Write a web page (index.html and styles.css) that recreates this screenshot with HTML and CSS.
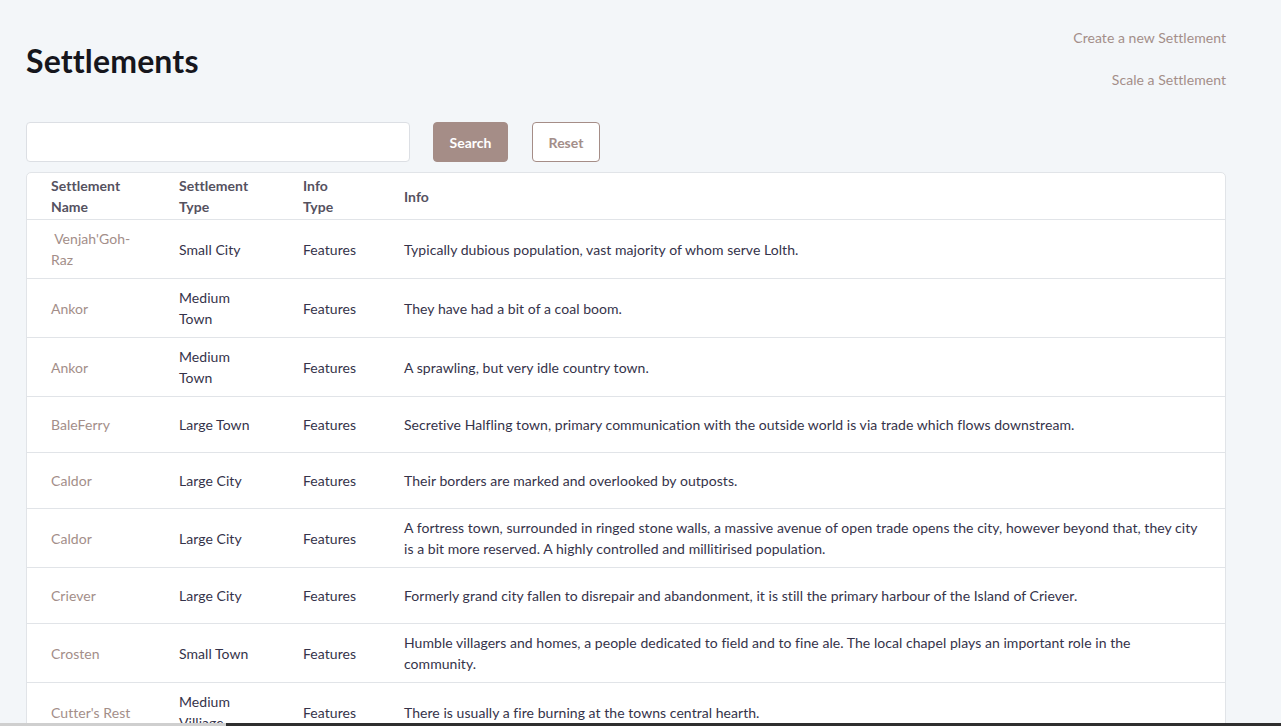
FILE: index.html
```html
<!DOCTYPE html>
<html lang="en">
<head>
<meta charset="utf-8">
<title>Settlements</title>
<link rel="stylesheet" href="styles.css">
</head>
<body>
<div class="page">
  <header class="header">
    <h1 class="title">Settlements</h1>
    <nav class="links">
      <a class="link" href="#">Create a new Settlement</a>
      <a class="link" href="#">Scale a Settlement</a>
    </nav>
  </header>
  <form class="search">
    <input class="search-input" type="text">
    <button class="btn btn-primary" type="button">Search</button>
    <button class="btn btn-outline" type="button">Reset</button>
  </form>
  <div class="card">
    <table class="table">
      <colgroup>
        <col class="c1"><col class="c2"><col class="c3"><col class="c4">
      </colgroup>
      <thead>
        <tr><th>Settlement Name</th><th>Settlement Type</th><th>Info Type</th><th>Info</th></tr>
      </thead>
      <tbody>
        <tr><td class="name">&nbsp;Venjah'Goh-Raz</td><td>Small City</td><td>Features</td><td>Typically dubious population, vast majority of whom serve Lolth.</td></tr>
        <tr><td class="name">Ankor</td><td>Medium Town</td><td>Features</td><td>They have had a bit of a coal boom.</td></tr>
        <tr><td class="name">Ankor</td><td>Medium Town</td><td>Features</td><td>A sprawling, but very idle country town.</td></tr>
        <tr><td class="name">BaleFerry</td><td>Large Town</td><td>Features</td><td>Secretive Halfling town, primary communication with the outside world is via trade which flows downstream.</td></tr>
        <tr><td class="name">Caldor</td><td>Large City</td><td>Features</td><td>Their borders are marked and overlooked by outposts.</td></tr>
        <tr><td class="name">Caldor</td><td>Large City</td><td>Features</td><td>A fortress town, surrounded in ringed stone walls, a massive avenue of open trade opens the city, however beyond that, they city is a bit more reserved. A highly controlled and millitirised population.</td></tr>
        <tr><td class="name">Criever</td><td>Large City</td><td>Features</td><td>Formerly grand city fallen to disrepair and abandonment, it is still the primary harbour of the Island of Criever.</td></tr>
        <tr><td class="name">Crosten</td><td>Small Town</td><td>Features</td><td>Humble villagers and homes, a people dedicated to field and to fine ale. The local chapel plays an important role in the community.</td></tr>
        <tr><td class="name">Cutter's Rest</td><td>Medium Villiage</td><td>Features</td><td>There is usually a fire burning at the towns central hearth.</td></tr>
        <tr><td class="name">Dunmar</td><td>Large Town</td><td>Features</td><td>A busy market town.</td></tr>
      </tbody>
    </table>
  </div>
</div>
<div class="hscroll"><div class="hscroll-thumb"></div></div>
</body>
</html>
```
FILE: styles.css
```css
* { box-sizing: border-box; }
html, body { margin: 0; padding: 0; }
body {
  background: #f3f6f9;
  font-family: "Lato", "Noto Sans", sans-serif;
  font-size: 14px;
  color: #35334a;
  overflow: hidden;
  height: 726px;
}
.page {
  width: 1200px;
  margin-left: 26px;
  padding-top: 28px;
}
.header {
  display: flex;
  justify-content: space-between;
  align-items: flex-start;
}
.title {
  margin: 14px 0 0 0;
  font-size: 32px;
  line-height: 38px;
  font-weight: 700;
  color: #16161d;
  letter-spacing: 0.15px;
}
.links {
  display: flex;
  flex-direction: column;
  align-items: flex-end;
  gap: 21px;
  margin-top: -1px;
}
.link {
  color: #a38e89;
  text-decoration: none;
  font-size: 14px;
  line-height: 21px;
  letter-spacing: 0.05px;
}
.search {
  display: flex;
  align-items: center;
  margin-top: 32px;
  margin-bottom: 10px;
}
.search-input {
  width: 384px;
  height: 40px;
  border: 1px solid #dcdfe4;
  border-radius: 4px;
  background: #fff;
  margin: 0 23px 0 0;
}
.btn {
  height: 40px;
  border-radius: 4px;
  font-family: inherit;
  font-size: 14px;
  font-weight: 700;
  padding: 0 12px;
  cursor: pointer;
}
.btn-primary {
  width: 75px;
  background: #a58d87;
  border: 1px solid #a58d87;
  color: #fff;
  margin-right: 24px;
}
.btn-outline {
  width: 68px;
  background: #fff;
  border: 1px solid #a58d87;
  color: #a38e89;
}
.card {
  background: #fff;
  border: 1px solid #e1e4e8;
  border-radius: 5px;
  overflow: hidden;
}
.table {
  width: 100%;
  border-collapse: collapse;
  table-layout: fixed;
  letter-spacing: 0.05px;
}
.c1 { width: 128px; }
.c2 { width: 124px; }
.c3 { width: 101px; }
.table th {
  text-align: left;
  font-weight: 700;
  font-size: 14px;
  line-height: 21px;
  color: #55525f;
  padding: 2px 24px 2px 24px;
  border-bottom: 1px solid #e1e4e8;
  vertical-align: middle;
}
.table td {
  height: 56px;
  padding: 8px 24px;
  line-height: 21px;
  border-bottom: 1px solid #e1e4e8;
  vertical-align: middle;
}
.table td.name { color: #a38e89; }
.hscroll {
  position: fixed;
  left: 0;
  right: 0;
  bottom: 0;
  height: 3px;
  background: #cfcfcf;
}
.hscroll-thumb {
  margin-left: 226px;
  height: 3px;
  background: #2f2f2f;
}
```
